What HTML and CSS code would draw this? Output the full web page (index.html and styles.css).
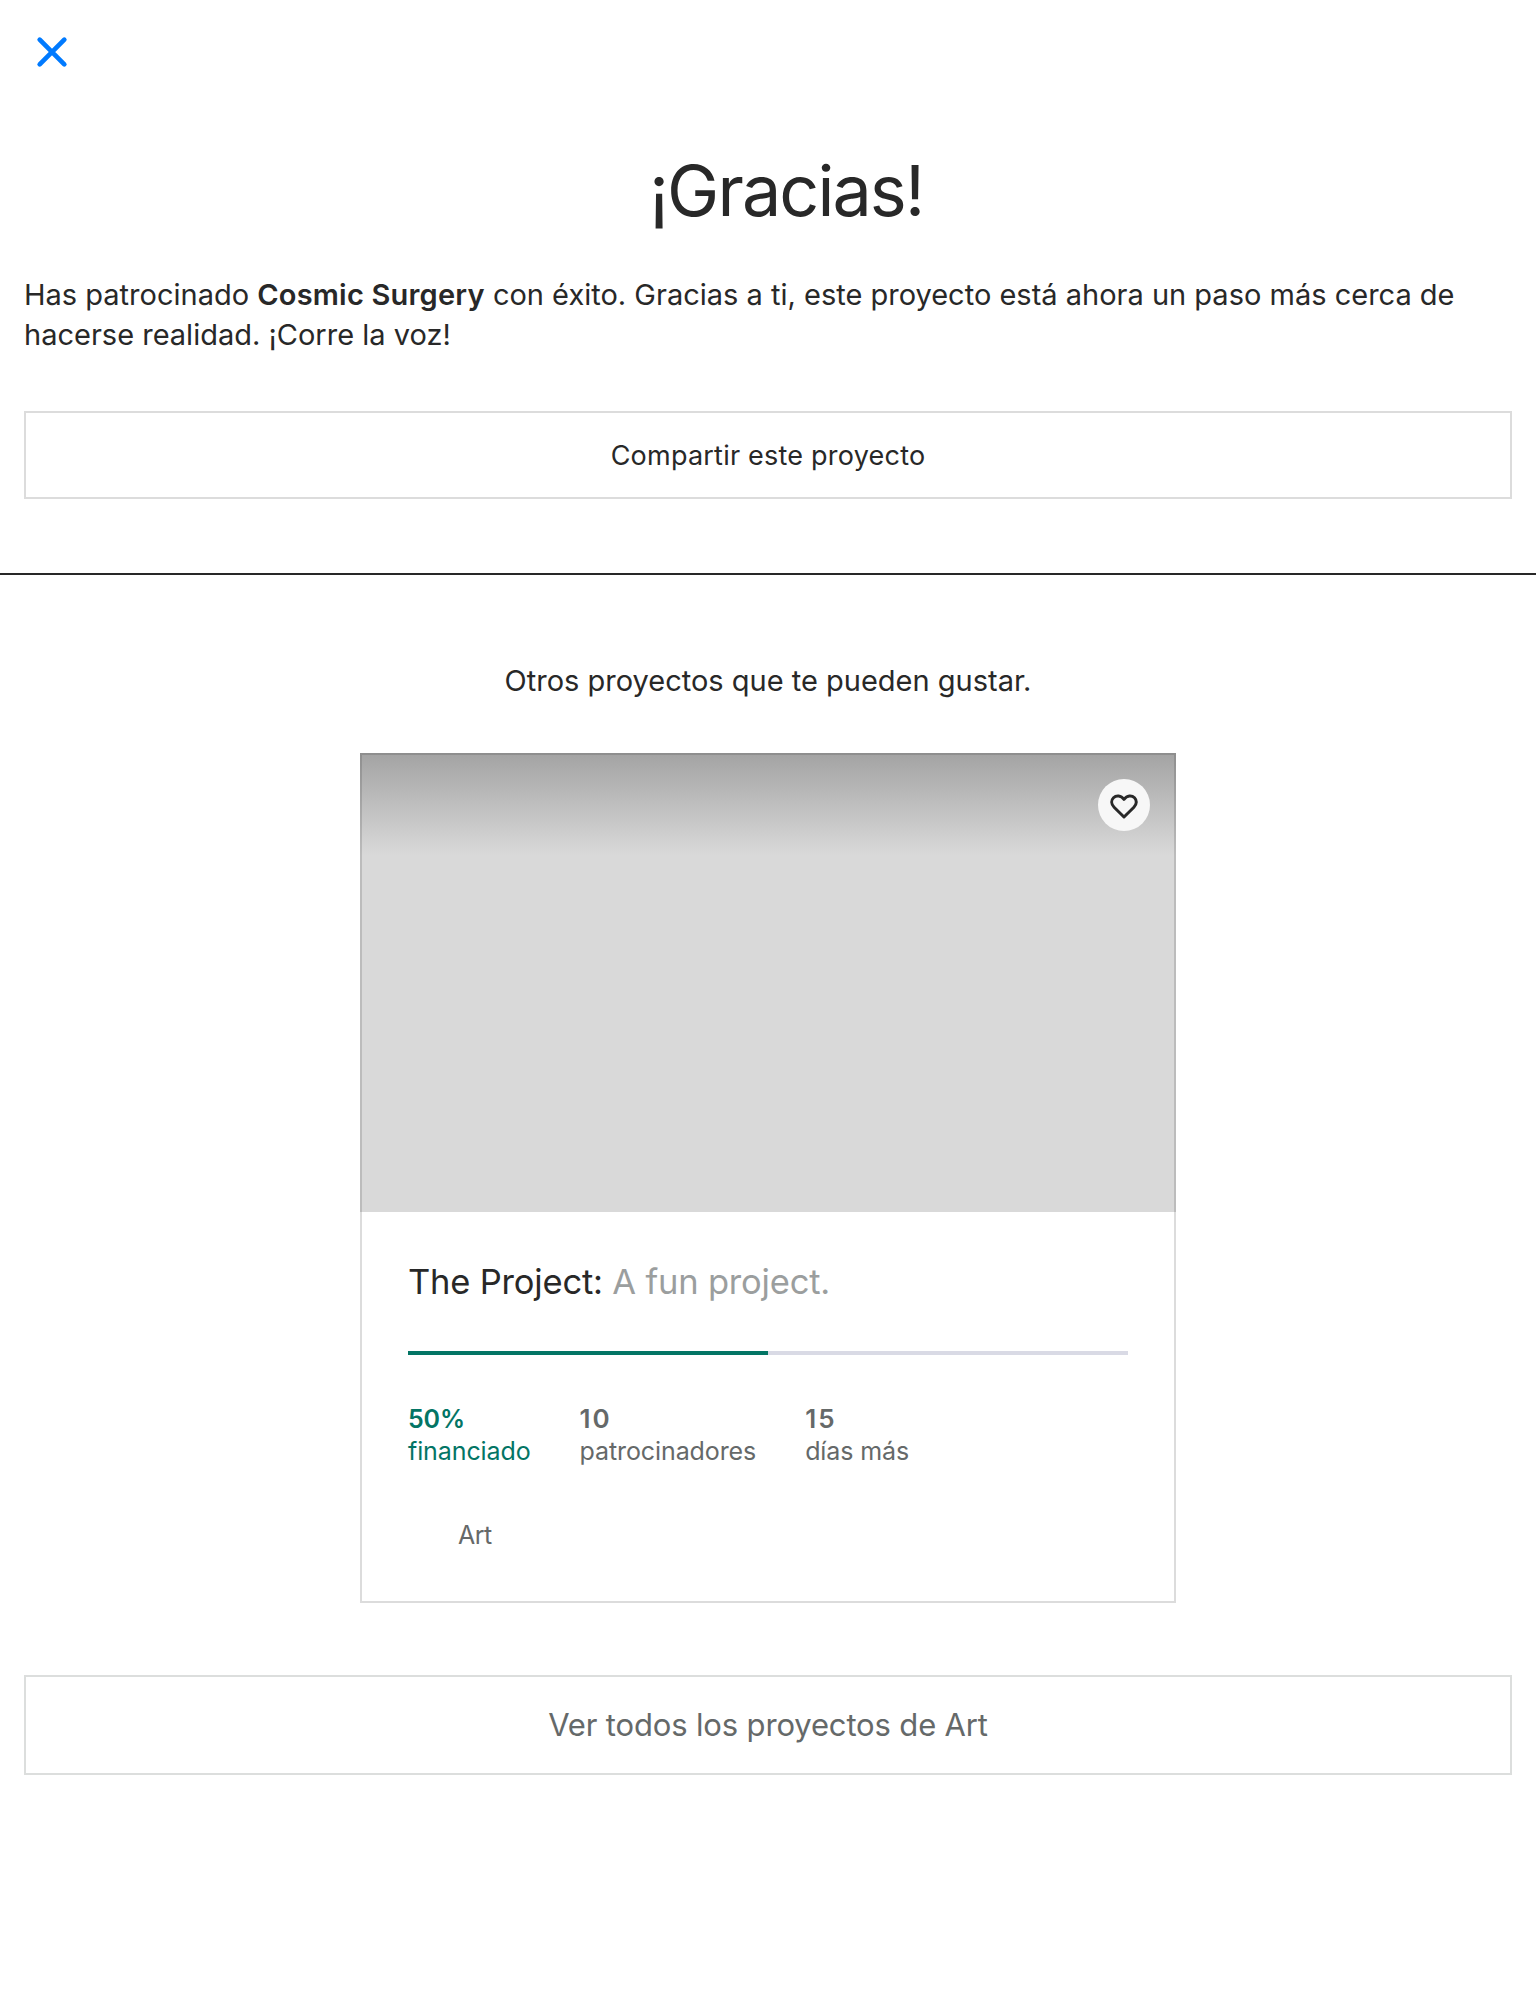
FILE: index.html
```html
<!DOCTYPE html>
<html lang="es">
<head>
<meta charset="utf-8">
<title>¡Gracias!</title>
<link rel="stylesheet" href="styles.css">
</head>
<body>
<header class="topbar">
  <svg class="close" viewBox="0 0 32 32" width="32" height="32"><path d="M3.7 3.7 28.3 28.3M28.3 3.7 3.7 28.3"/></svg>
</header>
<main>
  <section class="thanks">
    <h1 class="title">¡Gracias!</h1>
    <p class="message">Has patrocinado <strong>Cosmic Surgery</strong> con éxito. Gracias a ti, este proyecto está ahora un paso más cerca de hacerse realidad. ¡Corre la voz!</p>
    <div class="button share">Compartir este proyecto</div>
  </section>
  <section class="more">
    <h2 class="subtitle">Otros proyectos que te pueden gustar.</h2>
    <article class="card">
      <div class="photo">
        <div class="save"><svg viewBox="0 0 32 28" width="32" height="28"><path d="M16 26 6.1 16.3C3 13.2 3.1 9.2 5.5 6.8C8.2 4.1 12.9 4.1 16 8.4C19.1 4.1 23.8 4.1 26.5 6.8C28.9 9.2 29 13.2 25.9 16.3Z"/></svg></div>
      </div>
      <div class="details">
        <h3 class="name">The Project: <span class="blurb">A fun project.</span></h3>
        <div class="progress"><div class="bar" style="width: 50%"></div></div>
        <div class="stats">
          <div class="stat funded"><b>50%</b><span>financiado</span></div>
          <div class="stat"><b class="count">10</b><span>patrocinadores</span></div>
          <div class="stat"><b class="count">15</b><span>días más</span></div>
        </div>
        <div class="category">Art</div>
      </div>
    </article>
    <div class="button all">Ver todos los proyectos de Art</div>
  </section>
</main>
</body>
</html>
```
FILE: styles.css
```css
* { box-sizing: border-box; margin: 0; }
body { background: #fff; color: #282828; font-family: Inter, sans-serif; font-weight: 400; }
.topbar { height: 151px; padding: 36px; }
.close { display: block; fill: none; stroke: #007aff; stroke-width: 4.7; stroke-linecap: round; }
.thanks { height: 424px; padding: 0 24px; border-bottom: 2px solid #282828; }
.title { height: 80px; padding-left: 36px; text-align: center; font-size: 70px; line-height: 80px; font-weight: 400; letter-spacing: -1.9px; }
.message { margin-top: 44px; font-size: 29px; line-height: 40px; }
.message strong { font-weight: 600; letter-spacing: .2px; }
.button { display: flex; align-items: center; justify-content: center; border: 2px solid #dcdcdc; }
.share { height: 88px; margin-top: 56px; font-size: 27px; letter-spacing: .22px; }
.more { padding: 86px 24px 0; }
.subtitle { text-align: center; font-size: 29px; line-height: 40px; font-weight: 400; }
.card { position: relative; width: 816px; height: 850px; margin: 52px auto 0; }
.card::after { content: ""; position: absolute; inset: 0; border: 2px solid rgba(40, 40, 40, .16); }
.photo { display: flex; justify-content: flex-end; height: 459px; padding: 26px; background: linear-gradient(#a3a3a3, #d9d9d9 102px); }
.save { display: flex; align-items: center; justify-content: center; width: 52px; height: 52px; border-radius: 50%; background: #f7f7f7; }
.save svg { fill: none; stroke: #282828; stroke-width: 3; stroke-linejoin: round; }
.details { padding: 48px 48px 0; }
.name { font-size: 34.5px; line-height: 44px; font-weight: 400; letter-spacing: -.19px; }
.blurb { color: #9b9e9e; }
.progress { height: 4px; margin-top: 47px; background: #d9dae5; }
.bar { height: 4px; background: #037565; }
.stats { display: flex; gap: 49px; margin-top: 48px; font-size: 25px; line-height: 32px; letter-spacing: -.1px; color: #656969; }
.stat { display: flex; flex-direction: column; align-items: flex-start; }
.stat b { font-weight: 600; }
.stat .count { font-size: 26px; letter-spacing: 2px; }
.funded { color: #037565; }
.category { padding: 52px 0 0 50px; font-size: 25px; line-height: 32px; letter-spacing: -.5px; color: #656969; }
.all { height: 100px; margin-top: 72px; padding-bottom: 2px; font-size: 31px; letter-spacing: -.15px; color: #656969; border-color: #dcdedd; }
```
